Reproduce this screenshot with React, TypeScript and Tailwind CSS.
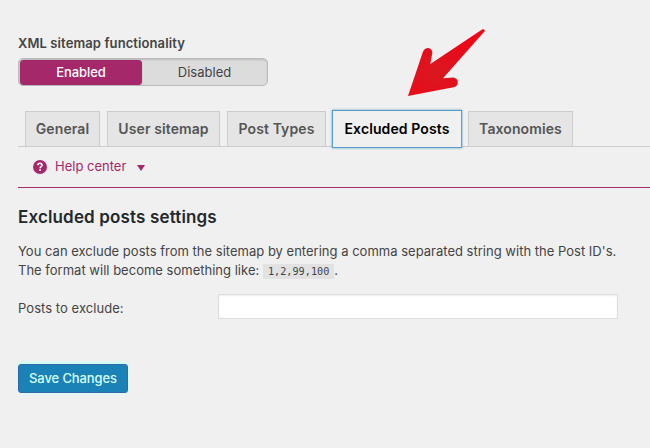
import React from 'react';

const tabs = [
  { label: 'General', width: 'w-[75px]', spacing: 'mr-[7px]' },
  { label: 'User sitemap', width: 'w-[113px]', spacing: 'mr-[7px]' },
  { label: 'Post Types', width: 'w-[99px]', spacing: 'mr-[6px]' },
  { label: 'Excluded Posts', width: 'w-[130px]', spacing: 'mr-[6px]', active: true },
  { label: 'Taxonomies', width: 'w-[105px]', spacing: '' },
];

const Arrow: React.FC = () => (
  <svg className="absolute left-[390px] top-5" width="110" height="90" viewBox="0 0 110 90">
    <defs>
      <radialGradient id="arrowFill" cx="0.35" cy="0.65" r="0.6">
        <stop offset="0" stopColor="#d91820" />
        <stop offset="1" stopColor="#ee0617" />
      </radialGradient>
    </defs>
    <path
      d="M18 76 L33.2 31 Q35 27.600 38.500 28 Q42.500 29 42.300 33 L40.300 44 L92.500 9.200 Q95 8.800 94.800 11 L53 58.200 L63.500 57.600 Q67.800 58.500 67.800 62.500 Q67.300 66.500 63.500 67.300 Z"
      fill="url(#arrowFill)"
    />
  </svg>
);

const Toggle: React.FC = () => (
  <div className="mt-[7px] flex h-7 w-[250px] rounded-[5px] border border-[#bbb] bg-[#dcdcdc] p-px text-[13px] leading-[25px] shadow-[inset_0_1px_2px_rgba(0,0,0,0.15)]">
    <div className="h-[25px] w-[122px] rounded-[4px] bg-[#a4286a] text-center font-medium tracking-[-0.1px] text-white shadow-[0_0_1px_#777]">
      Enabled
    </div>
    <div className="flex-1 pl-px text-center text-[#444]">Disabled</div>
  </div>
);

const App: React.FC = () => {
  return (
    <div className="relative h-[448px] w-[650px] overflow-hidden bg-[#f0f0f0] pl-[18px] font-['Inter',sans-serif] text-[13px] text-[#444]">
      <div className="h-[51px] pt-[35px] font-semibold leading-4 tracking-[0.1px]">XML sitemap functionality</div>
      <Toggle />

      <div className="mt-6 flex h-[37px] border-b border-[#ccc] pl-[7px] tracking-[0.1px]">
        {tabs.map((tab) =>
          tab.active ? (
            <div
              key={tab.label}
              className={`z-10 h-[38px] whitespace-nowrap border border-[#5b9dc9] bg-[#f0f0f0] text-center text-[14px] font-semibold leading-[35px] text-black shadow-[0_0_2px_rgba(30,140,190,0.8)] ${tab.width} ${tab.spacing}`}
            >
              {tab.label}
            </div>
          ) : (
            <div
              key={tab.label}
              className={`mt-px h-[36px] whitespace-nowrap border border-[#ccc] bg-[#e5e5e5] text-center text-[14px] font-semibold leading-[33px] text-[#555] ${tab.width} ${tab.spacing}`}
            >
              {tab.label}
            </div>
          ),
        )}
      </div>

      <div className="flex h-[41px] items-center border-b border-[#a4286a] pl-[15px] text-[#a4286a]">
        <svg width="14" height="14" viewBox="0 0 14 14">
          <circle cx="7" cy="7" r="7" fill="#a4286a" />
          <path d="M4.900 5.300 C5 2.600 9.200 2.700 9.100 5.200 C9 6.600 7.100 6.700 7.100 8.300" fill="none" stroke="#fff" strokeWidth="1.600" />
          <rect x="6.200" y="9.300" width="1.800" height="1.700" fill="#fff" />
        </svg>
        <span className="ml-2">Help center</span>
        <svg className="ml-[11px] mt-0.5" width="8" height="6" viewBox="0 0 8 6">
          <path d="M0 0H8L4 6Z" fill="#a4286a" />
        </svg>
      </div>

      <h2 className="mt-[17px] text-[17px] font-semibold leading-6 tracking-[0.15px] text-[#23282d]">Excluded posts settings</h2>

      <p className="mt-[13px] h-[38px] whitespace-nowrap leading-[19px] tracking-[0.01px]">
        You can exclude posts from the sitemap by entering a comma separated string with the Post ID's.
        <br />
        The format will become something like:{' '}
        <code className="bg-[#e2e2e2] px-[5px] py-[2px] font-['DejaVu_Sans_Mono',monospace] text-[10.2px]">1,2,99,100</code>.
      </p>

      <div className="mt-[14px] flex h-[25px] items-center">
        <label className="w-[200px] pt-1 tracking-[0.05px]" htmlFor="excluded-posts">Posts to exclude:</label>
        <input
          id="excluded-posts"
          className="h-[25px] w-[400px] border border-[#ddd] bg-white shadow-[inset_0_1px_2px_rgba(0,0,0,0.07)]"
        />
      </div>

      <button className="mt-[45px] block h-[29px] w-[110px] whitespace-nowrap rounded-[3px] border border-[#3467a8] bg-[#1b82b8] text-center font-medium leading-[27px] tracking-[-0.1px] text-[#d5ffff] shadow-[0_-2px_2px_#c8fff2,0_2px_2px_#e0f8f4]">
        Save Changes
      </button>

      <Arrow />
    </div>
  );
};

export default App;
